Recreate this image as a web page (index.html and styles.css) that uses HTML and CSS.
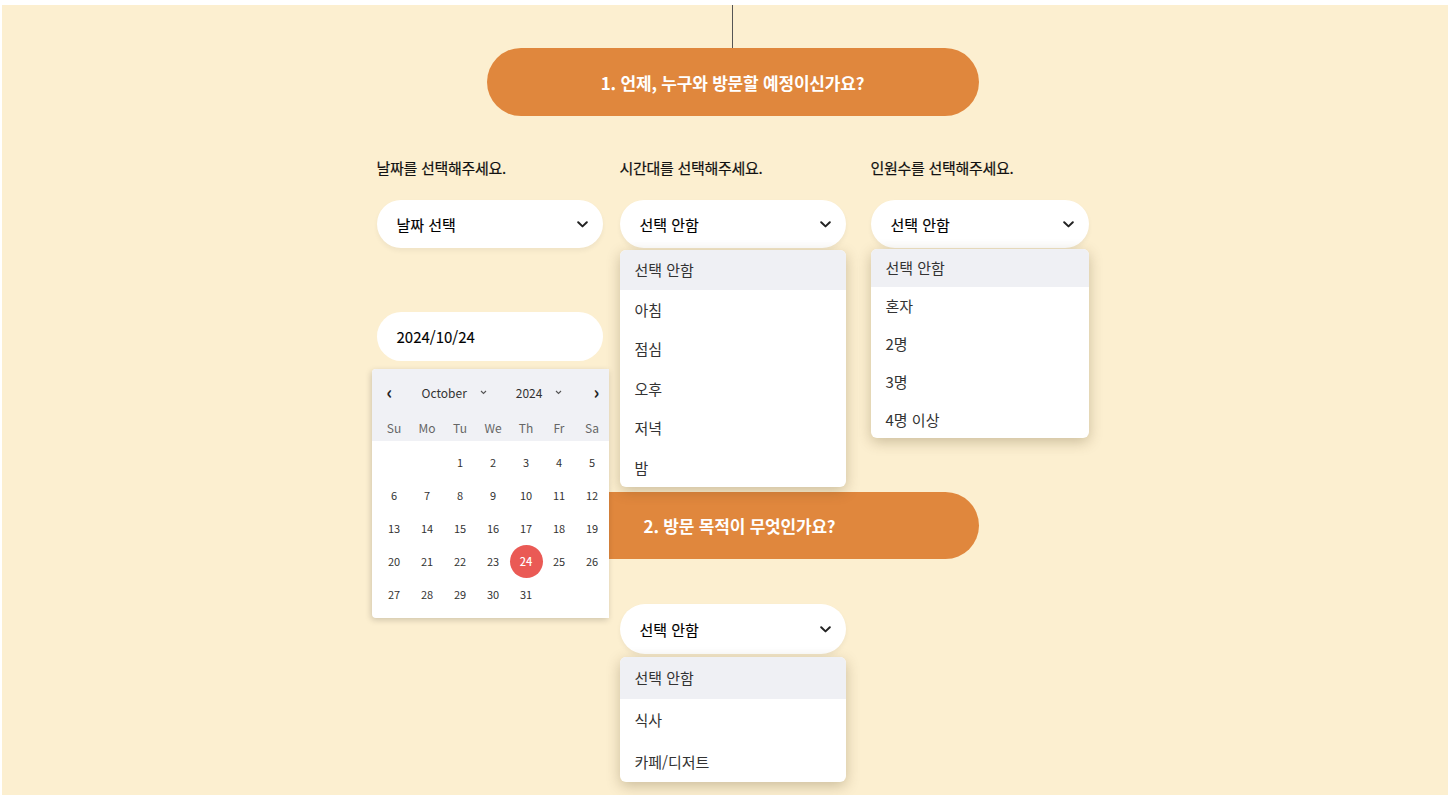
FILE: index.html
```html
<!DOCTYPE html>
<html lang="ko">
<head>
<meta charset="utf-8">
<title>방문 예약</title>
<link rel="stylesheet" href="styles.css">
</head>
<body>
<main class="page">
  <div class="connector"></div>
  <div class="question q1">1. 언제, 누구와 방문할 예정이신가요?</div>

  <section class="fields">
    <div class="field">
      <div class="label">날짜를 선택해주세요.</div>
      <div class="select w226"><span>날짜 선택</span>
        <svg class="chev" width="11" height="7" viewBox="0 0 11 7"><path d="M1.2 1.2l4.3 4.2 4.3-4.2" fill="none" stroke="#222" stroke-width="2" stroke-linecap="round" stroke-linejoin="round"/></svg>
      </div>
      <div class="date-wrap">
        <div class="date-input">2024/10/24</div>
        <div class="calendar">
          <div class="cal-head">
            <div class="cal-nav">
              <span class="arrow">‹</span>
              <span class="sel month">October <svg width="7" height="5" viewBox="0 0 7 5"><path d="M1 1l2.5 2.5L6 1" fill="none" stroke="#555" stroke-width="1.1"/></svg></span>
              <span class="sel year">2024 <svg width="7" height="5" viewBox="0 0 7 5"><path d="M1 1l2.5 2.5L6 1" fill="none" stroke="#555" stroke-width="1.1"/></svg></span>
              <span class="arrow">›</span>
            </div>
            <div class="cal-days">
              <span>Su</span><span>Mo</span><span>Tu</span><span>We</span><span>Th</span><span>Fr</span><span>Sa</span>
            </div>
          </div>
          <div class="cal-grid">
            <span></span><span></span><span>1</span><span>2</span><span>3</span><span>4</span><span>5</span>
            <span>6</span><span>7</span><span>8</span><span>9</span><span>10</span><span>11</span><span>12</span>
            <span>13</span><span>14</span><span>15</span><span>16</span><span>17</span><span>18</span><span>19</span>
            <span>20</span><span>21</span><span>22</span><span>23</span><span class="today">24</span><span>25</span><span>26</span>
            <span>27</span><span>28</span><span>29</span><span>30</span><span>31</span><span></span><span></span>
          </div>
        </div>
      </div>
    </div>

    <div class="field">
      <div class="label">시간대를 선택해주세요.</div>
      <div class="select-wrap">
        <div class="select w226"><span>선택 안함</span>
          <svg class="chev" width="11" height="7" viewBox="0 0 11 7"><path d="M1.2 1.2l4.3 4.2 4.3-4.2" fill="none" stroke="#222" stroke-width="2" stroke-linecap="round" stroke-linejoin="round"/></svg>
        </div>
        <ul class="menu menu-time">
          <li class="active">선택 안함</li>
          <li>아침</li>
          <li>점심</li>
          <li>오후</li>
          <li>저녁</li>
          <li>밤</li>
        </ul>
      </div>
    </div>

    <div class="field">
      <div class="label">인원수를 선택해주세요.</div>
      <div class="select-wrap">
        <div class="select w218"><span>선택 안함</span>
          <svg class="chev" width="11" height="7" viewBox="0 0 11 7"><path d="M1.2 1.2l4.3 4.2 4.3-4.2" fill="none" stroke="#222" stroke-width="2" stroke-linecap="round" stroke-linejoin="round"/></svg>
        </div>
        <ul class="menu menu-people">
          <li class="active">선택 안함</li>
          <li>혼자</li>
          <li>2명</li>
          <li>3명</li>
          <li>4명 이상</li>
        </ul>
      </div>
    </div>
  </section>

  <div class="question q2">2. 방문 목적이 무엇인가요?</div>

  <section class="fields purpose">
    <div class="field"></div>
    <div class="field">
      <div class="select-wrap">
        <div class="select w226 tall"><span>선택 안함</span>
          <svg class="chev" width="11" height="7" viewBox="0 0 11 7"><path d="M1.2 1.2l4.3 4.2 4.3-4.2" fill="none" stroke="#222" stroke-width="2" stroke-linecap="round" stroke-linejoin="round"/></svg>
        </div>
        <ul class="menu menu-purpose">
          <li class="active">선택 안함</li>
          <li>식사</li>
          <li>카페/디저트</li>
        </ul>
      </div>
    </div>
    <div class="field"></div>
  </section>
</main>
</body>
</html>
```

FILE: styles.css
```css
* { box-sizing: border-box; }

html, body {
  margin: 0;
  padding: 0;
  background: #ffffff;
}

body {
  padding: 5px 2px 3px 2px;
  font-family: "Noto Sans CJK KR", "Noto Sans", sans-serif;
  color: #222;
}

.page {
  height: 790px;
  background: #fcefd0;
  display: flex;
  flex-direction: column;
  align-items: center;
  overflow: hidden;
  padding-left: 15px;
}

.connector {
  width: 1px;
  height: 43px;
  background: #555;
}

.question {
  width: 492px;
  background: #e0873d;
  color: #fff;
  font-weight: 700;
  font-size: 17px;
  display: flex;
  align-items: center;
  justify-content: center;
  border-radius: 34px;
  letter-spacing: -0.2px;
}

.q1 {
  height: 68px;
}

.q2 {
  height: 67px;
  margin-top: 131px;
  padding-left: 14px;
}

.fields {
  display: grid;
  grid-template-columns: 243px 251px 218px;
  margin-top: 41px;
}

.fields.purpose {
  margin-top: 45px;
}

.field {
  display: flex;
  flex-direction: column;
}

.label {
  font-size: 15px;
  line-height: 22px;
  font-weight: 400;
  color: #111;
  letter-spacing: -0.3px;
  margin-bottom: 21px;
  -webkit-text-stroke: 0.2px #111;
}

.select-wrap {
  position: relative;
}

.select {
  height: 48px;
  background: #fff;
  border-radius: 24px;
  display: flex;
  align-items: center;
  justify-content: space-between;
  padding: 0 15px 0 20px;
  font-size: 15px;
  font-weight: 400;
  color: #000;
  -webkit-text-stroke: 0.15px #000;
  box-shadow: 0 3px 5px rgba(0, 0, 0, 0.05);
}

.select.tall {
  height: 50px;
  border-radius: 25px;
}

.w226 { width: 226px; }
.w218 { width: 218px; }

.chev { flex: none; }

.menu {
  position: absolute;
  left: 0;
  top: calc(100% + 2px);
  width: 226px;
  margin: 0;
  padding: 0;
  list-style: none;
  background: #fff;
  border-radius: 6px;
  overflow: hidden;
  box-shadow: 0 4px 14px rgba(80, 60, 20, 0.28);
  z-index: 5;
}

.menu li {
  display: flex;
  align-items: center;
  padding-left: 15px;
  font-size: 15px;
  color: #333;
}

.menu li.active {
  background: #eff0f4;
}

.menu-time li { height: 39.5px; }

.menu-people {
  width: 218px;
  top: calc(100% + 1px);
}
.menu-people li { height: 37.8px; }

.menu-purpose {
  top: calc(100% + 3px);
}
.menu-purpose li { height: 41.7px; }

.date-wrap {
  position: relative;
  margin-top: 64px;
  width: 226px;
}

.date-input {
  height: 49px;
  background: #fff;
  border-radius: 25px;
  display: flex;
  align-items: center;
  padding-left: 20px;
  font-size: 15px;
  font-weight: 400;
  color: #000;
  -webkit-text-stroke: 0.1px #000;
}

.calendar {
  position: absolute;
  left: -5px;
  top: 57px;
  width: 237px;
  background: #fff;
  border-radius: 4px 0 0 4px;
  box-shadow: -1px 2px 6px rgba(0, 0, 0, 0.18);
  z-index: 6;
}

.cal-head {
  background: #f0f1f5;
  border-radius: 4px 0 0 0;
}

.cal-nav {
  height: 46px;
  display: flex;
  align-items: center;
  padding: 0 0 0 6px;
  font-size: 12px;
  color: #333;
}

.cal-nav .arrow {
  width: 33px;
  text-align: center;
  font-size: 18px;
  font-weight: 700;
  color: #222;
  line-height: 1;
  margin-top: -3px;
}

.cal-nav .sel {
  display: flex;
  align-items: center;
  gap: 13px;
}

.cal-nav .month {
  margin-left: 20px;
}

.cal-nav .year {
  margin-left: 29px;
  margin-right: 22px;
}

.cal-days,
.cal-grid {
  display: grid;
  grid-template-columns: repeat(7, 33px);
  padding-left: 6px;
}

.cal-days {
  height: 26px;
  align-items: center;
  font-size: 12px;
  color: #666;
  padding-bottom: 2px;
}

.cal-days span,
.cal-grid span {
  text-align: center;
}

.cal-grid {
  padding-top: 4.5px;
  padding-bottom: 7.5px;
  font-size: 11px;
  color: #333;
}

.cal-grid span {
  height: 33px;
  display: flex;
  align-items: center;
  justify-content: center;
}

.cal-grid .today {
  background: #ea5a55;
  color: #fff;
  border-radius: 50%;
  font-weight: 500;
}
```
